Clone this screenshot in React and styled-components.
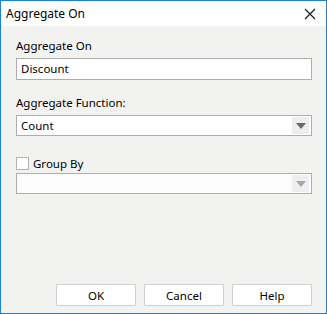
import React from 'react'
import styled, { createGlobalStyle } from 'styled-components'

const Global = createGlobalStyle`
  html, body { margin: 0; padding: 0; }
  body { font-family: "Noto Sans", "Segoe UI", sans-serif; font-size: 11.5px; color: #000; }
`

const Window = styled.div`
  width: 327px;
  height: 314px;
  box-sizing: border-box;
  border: 1px solid #1883d7;
  display: flex;
  flex-direction: column;
  background: #f2f3f1;
`

const TitleBar = styled.div`
  height: 25px;
  background: #fff;
  display: flex;
  align-items: center;
  justify-content: space-between;
  padding: 0 10px 0 5px;
  font-size: 12px;
  flex-shrink: 0;
`

const Body = styled.div`
  flex: 1;
  display: flex;
  flex-direction: column;
  padding: 11px 14px 7px 15px;
`

const Label = styled.div`
  height: 18px;
  line-height: 18px;
  margin-bottom: ${p => p.gap || 3}px;
`

const Input = styled.div`
  height: 22px;
  box-sizing: border-box;
  border: 1px solid #adadad;
  background: #fff;
  padding-left: 4px;
  line-height: 20px;
  margin-bottom: ${p => p.mb || 0}px;
`

const Select = styled.div`
  height: 21px;
  box-sizing: border-box;
  border: 1px solid #adadad;
  background: ${p => p.disabled ? '#fbfcfb' : '#fff'};
  display: flex;
  align-items: center;
  justify-content: space-between;
  padding: 1px 2px 1px 4px;
  margin-bottom: ${p => p.mb || 0}px;
`

const ArrowBox = styled.div`
  width: 17px;
  height: 17px;
  background: ${p => p.disabled ? '#eeeff0' : '#ecedee'};
  display: flex;
  align-items: center;
  justify-content: center;
  &::after {
    content: '';
    border-left: 5px solid transparent;
    border-right: 5px solid transparent;
    border-top: 6px solid ${p => p.disabled ? '#a9a9a9' : '#6a6a6a'};
  }
`

const CheckRow = styled.div`
  display: flex;
  align-items: center;
  gap: 4px;
  height: 18px;
  margin-bottom: 1px;
`

const Box = styled.div`
  width: 13px;
  height: 13px;
  box-sizing: border-box;
  border: 1px solid #b2b2b2;
  background: #fff;
`

const Footer = styled.div`
  margin-top: auto;
  display: flex;
  justify-content: flex-end;
  gap: 8px;
`

const Button = styled.div`
  width: 80px;
  height: 22px;
  box-sizing: border-box;
  border: 1px solid #d0d0d0;
  background: #fff;
  display: flex;
  align-items: center;
  justify-content: center;
`

const Close = () => (
  <svg width="12" height="12" viewBox="0 0 12 12">
    <path d="M1 1 L11 11 M11 1 L1 11" stroke="#111" strokeWidth="1.1" fill="none" />
  </svg>
)

export default function App() {
  return (
    <>
      <Global />
      <Window>
        <TitleBar>
          <span>Aggregate On</span>
          <Close />
        </TitleBar>
        <Body>
          <Label>Aggregate On</Label>
          <Input mb={14}>Discount</Input>
          <Label gap={3}>Aggregate Function:</Label>
          <Select mb={18}>
            <span>Count</span>
            <ArrowBox />
          </Select>
          <CheckRow>
            <Box />
            <span>Group By</span>
          </CheckRow>
          <Select disabled>
            <span />
            <ArrowBox disabled />
          </Select>
          <Footer>
            <Button>OK</Button>
            <Button>Cancel</Button>
            <Button>Help</Button>
          </Footer>
        </Body>
      </Window>
    </>
  )
}
